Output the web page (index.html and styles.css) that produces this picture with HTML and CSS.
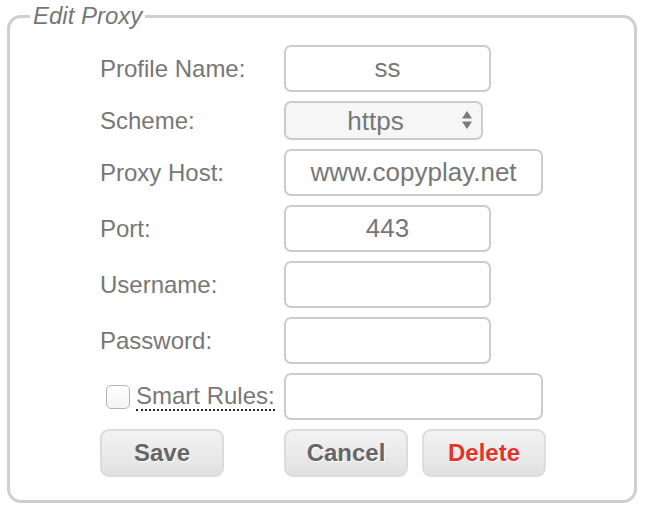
FILE: index.html
```html
<!DOCTYPE html>
<html>
<head>
<meta charset="utf-8">
<title>Edit Proxy</title>
<link rel="stylesheet" href="styles.css">
</head>
<body>
<fieldset class="panel">
  <legend class="panel-title">Edit Proxy</legend>
  <div class="form">
    <label class="lbl">Profile Name:</label>
    <input class="field" type="text" value="ss">

    <label class="lbl">Scheme:</label>
    <div class="select-wrap">
      <select class="select">
        <option>https</option>
      </select>
      <svg class="select-arrows" width="12" height="20" viewBox="0 0 12 20">
        <path d="M6 1 L11 8.5 L1 8.5 Z" fill="#7a7a7a"/>
        <path d="M6 19 L11 11.5 L1 11.5 Z" fill="#7a7a7a"/>
      </svg>
    </div>

    <label class="lbl">Proxy Host:</label>
    <input class="field wide" type="text" value="www.copyplay.net">

    <label class="lbl">Port:</label>
    <input class="field" type="text" value="443">

    <label class="lbl">Username:</label>
    <input class="field" type="text" value="">

    <label class="lbl">Password:</label>
    <input class="field" type="password" value="">

    <div class="lbl check-lbl">
      <input class="check" type="checkbox">
      <span class="dotted">Smart Rules:</span>
    </div>
    <input class="field wide" type="text" value="">

    <div class="btn-cell">
      <button class="btn">Save</button>
    </div>
    <div class="btn-cell btn-group">
      <button class="btn">Cancel</button>
      <button class="btn danger">Delete</button>
    </div>
  </div>
</fieldset>
</body>
</html>
```

FILE: styles.css
```css
html, body {
  margin: 0;
  padding: 0;
  background: #ffffff;
}

body {
  font-family: "Liberation Sans", Arial, Helvetica, sans-serif;
  padding-top: 3px;
}

.panel {
  box-sizing: border-box;
  width: 630px;
  margin: 0 0 0 7px;
  padding: 0;
  border: 3px solid #cfcfcf;
  border-radius: 14px;
  min-width: 0;
}

.panel-title {
  margin-left: 20px;
  padding: 0 3px;
  font-style: italic;
  font-size: 24px;
  line-height: 26px;
  color: #777777;
}

.form {
  display: grid;
  grid-template-columns: 184px 1fr;
  row-gap: 9px;
  align-items: center;
  padding: 16px 0 23px 90px;
}

.lbl {
  font-size: 24px;
  color: #777777;
}

.field {
  box-sizing: border-box;
  width: 207px;
  height: 47px;
  margin: 0;
  padding: 0 6px;
  border: 2px solid #cccccc;
  border-radius: 7px;
  background: #ffffff;
  font-family: "Liberation Sans", Arial, Helvetica, sans-serif;
  font-size: 26px;
  color: #777777;
  text-align: center;
  outline: none;
}

.field.wide {
  width: 259px;
}

.select-wrap {
  position: relative;
  width: 199px;
  height: 39px;
}

.select {
  box-sizing: border-box;
  width: 199px;
  height: 39px;
  margin: 0;
  padding: 0 24px 0 8px;
  border: 2px solid #cccccc;
  border-radius: 7px;
  background: #f6f6f6;
  -webkit-appearance: none;
  appearance: none;
  font-family: "Liberation Sans", Arial, Helvetica, sans-serif;
  font-size: 26px;
  color: #777777;
  text-align: center;
  text-align-last: center;
  outline: none;
}

.select-arrows {
  position: absolute;
  right: 10px;
  top: 9px;
  pointer-events: none;
}

.check-lbl {
  display: flex;
  align-items: center;
}

.check {
  box-sizing: border-box;
  -webkit-appearance: none;
  appearance: none;
  width: 24px;
  height: 24px;
  margin: 0 6px 0 6px;
  border: 1.5px solid #b5b5b5;
  border-radius: 5px;
  background: linear-gradient(#ffffff, #f3f3f3);
}

.dotted {
  border-bottom: 2px dotted #222222;
  line-height: 27px;
}

.btn-cell {
  display: flex;
}

.btn-group {
  gap: 14px;
}

.btn {
  box-sizing: border-box;
  width: 124px;
  height: 48px;
  margin: 0;
  padding: 0;
  border: 2px solid #dcdcdc;
  border-radius: 9px;
  background: linear-gradient(#f3f3f3, #e1e1e1);
  font-family: "Liberation Sans", Arial, Helvetica, sans-serif;
  font-weight: bold;
  font-size: 24px;
  color: #666666;
  text-shadow: 1px 1px 0 #ffffff;
}

.btn.danger {
  color: #e8312a;
}
```
